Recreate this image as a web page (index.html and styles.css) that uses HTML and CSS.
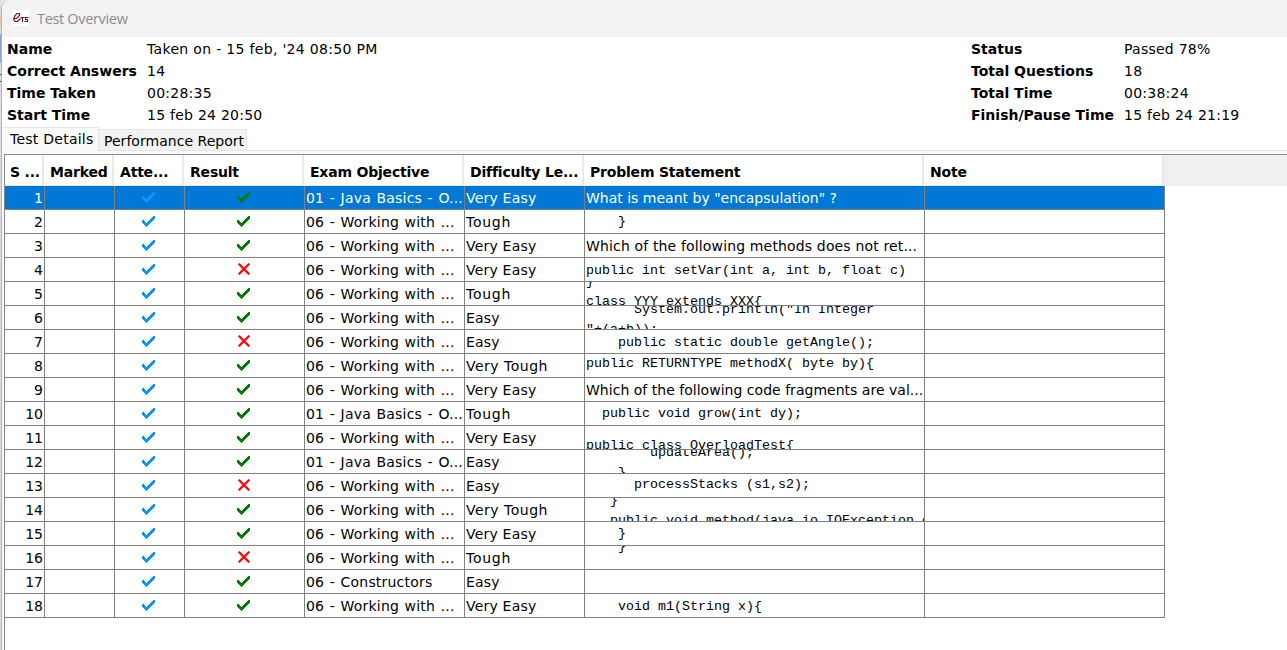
FILE: index.html
```
<!DOCTYPE html>
<html lang="en">
<head>
<meta charset="utf-8">
<title>Test Overview</title>
<link rel="stylesheet" href="styles.css">
</head>
<body>
<svg class="defs" aria-hidden="true">
  <symbol id="check" viewBox="0 0 14 13"><path d="M0 5H1L4.300 8.300 12 .5H13.300V3L5 11.500H3.800L0 7.800Z"/></symbol>
  <symbol id="cross" viewBox="0 0 12 12"><path d="M.7.7 11.300 11.300M11.300.7.7 11.300"/></symbol>
</svg>
<div class="desktop">
  <div class="behind"><i class="b1"></i><i class="b2"></i><i class="b3"></i><i class="b4"></i></div>
  <main class="window">
    <header class="titlebar">
      <svg class="logo" viewBox="0 0 16 16"><rect width="16" height="16" fill="#fff"/><path d="M0 8.500H3.500L6.500 5.500V3.500H4L2 5.500 1 8.500V10.500L2.500 11.500H4.500L7.500 8.500M7.500 7.500H11.500M9.500 7.500V12M15.500 7.500H12.500V9.500H14.500V11.500H11.500" fill="none" stroke="#701820" stroke-width="1.200"/></svg>
      <span class="title">Test Overview</span>
    </header>
    <section class="summary">
      <dl class="facts left">
        <dt>Name</dt><dd class="taken">Taken on - 15 feb, '24 08:50 PM</dd>
        <dt>Correct Answers</dt><dd>14</dd>
        <dt>Time Taken</dt><dd>00:28:35</dd>
        <dt>Start Time</dt><dd>15 feb 24 20:50</dd>
      </dl>
      <dl class="facts right">
        <dt>Status</dt><dd>Passed 78%</dd>
        <dt>Total Questions</dt><dd>18</dd>
        <dt>Total Time</dt><dd>00:38:24</dd>
        <dt>Finish/Pause Time</dt><dd>15 feb 24 21:19</dd>
      </dl>
    </section>
    <nav class="tabs"><span class="tab active">Test Details</span><span class="tab">Performance Report</span></nav>
    <section class="pane">
      <div class="row head"><span>S ...</span><span>Marked</span><span>Atte...</span><span>Result</span><span>Exam Objective</span><span>Difficulty Le...</span><span>Problem Statement</span><span>Note</span></div>
      <div class="row selected"><b>1</b><i></i><i><svg class="tick"><use href="#check"/></svg></i><i><svg class="tick ok"><use href="#check"/></svg></i><span class="obj">01 - Java Basics - O...</span><span>Very Easy</span><span class="q1">What is meant by "encapsulation" ?</span><i></i></div>
      <div class="row"><b>2</b><i></i><i><svg class="tick"><use href="#check"/></svg></i><i><svg class="tick ok"><use href="#check"/></svg></i><span class="obj">06 - Working with ...</span><span class="tough">Tough</span><pre class="d2">    }</pre><i></i></div>
      <div class="row"><b>3</b><i></i><i><svg class="tick"><use href="#check"/></svg></i><i><svg class="tick ok"><use href="#check"/></svg></i><span class="obj">06 - Working with ...</span><span>Very Easy</span><span class="q2">Which of the following methods does not ret...</span><i></i></div>
      <div class="row"><b>4</b><i></i><i><svg class="tick"><use href="#check"/></svg></i><i><svg class="fail"><use href="#cross"/></svg></i><span class="obj">06 - Working with ...</span><span>Very Easy</span><pre class="d3">public int setVar(int a, int b, float c)</pre><i></i></div>
      <div class="row"><b>5</b><i></i><i><svg class="tick"><use href="#check"/></svg></i><i><svg class="tick ok"><use href="#check"/></svg></i><span class="obj">06 - Working with ...</span><span class="tough">Tough</span><pre><code class="u10">}
class YYY extends XXX{</code></pre><i></i></div>
      <div class="row"><b>6</b><i></i><i><svg class="tick"><use href="#check"/></svg></i><i><svg class="tick ok"><use href="#check"/></svg></i><span class="obj">06 - Working with ...</span><span>Easy</span><pre><code class="u6">      System.out.println("In Integer
"+(a+b));</code></pre><i></i></div>
      <div class="row"><b>7</b><i></i><i><svg class="tick"><use href="#check"/></svg></i><i><svg class="fail"><use href="#cross"/></svg></i><span class="obj">06 - Working with ...</span><span>Easy</span><pre class="d3">    public static double getAngle();</pre><i></i></div>
      <div class="row"><b>8</b><i></i><i><svg class="tick"><use href="#check"/></svg></i><i><svg class="tick ok"><use href="#check"/></svg></i><span class="obj">06 - Working with ...</span><span class="vt">Very Tough</span><pre>public RETURNTYPE methodX( byte by){</pre><i></i></div>
      <div class="row"><b>9</b><i></i><i><svg class="tick"><use href="#check"/></svg></i><i><svg class="tick ok"><use href="#check"/></svg></i><span class="obj">06 - Working with ...</span><span>Very Easy</span><span class="q3">Which of the following code fragments are val...</span><i></i></div>
      <div class="row"><b>10</b><i></i><i><svg class="tick"><use href="#check"/></svg></i><i><svg class="tick ok"><use href="#check"/></svg></i><span class="obj">01 - Java Basics - O...</span><span class="tough">Tough</span><pre class="d2">  public void grow(int dy);</pre><i></i></div>
      <div class="row"><b>11</b><i></i><i><svg class="tick"><use href="#check"/></svg></i><i><svg class="tick ok"><use href="#check"/></svg></i><span class="obj">06 - Working with ...</span><span>Very Easy</span><pre class="d10">public class OverloadTest{</pre><i></i></div>
      <div class="row"><b>12</b><i></i><i><svg class="tick"><use href="#check"/></svg></i><i><svg class="tick ok"><use href="#check"/></svg></i><span class="obj">01 - Java Basics - O...</span><span>Easy</span><pre><code class="u7">        updateArea();
    }</code></pre><i></i></div>
      <div class="row"><b>13</b><i></i><i><svg class="tick"><use href="#check"/></svg></i><i><svg class="fail"><use href="#cross"/></svg></i><span class="obj">06 - Working with ...</span><span>Easy</span><pre class="d1">      processStacks (s1,s2);</pre><i></i></div>
      <div class="row"><b>14</b><i></i><i><svg class="tick"><use href="#check"/></svg></i><i><svg class="tick ok"><use href="#check"/></svg></i><span class="obj">06 - Working with ...</span><span class="vt">Very Tough</span><pre><code class="u8">   }
   public void method(java.io.IOException e</code></pre><i></i></div>
      <div class="row"><b>15</b><i></i><i><svg class="tick"><use href="#check"/></svg></i><i><svg class="tick ok"><use href="#check"/></svg></i><span class="obj">06 - Working with ...</span><span>Very Easy</span><pre class="d2">    }</pre><i></i></div>
      <div class="row"><b>16</b><i></i><i><svg class="tick"><use href="#check"/></svg></i><i><svg class="fail"><use href="#cross"/></svg></i><span class="obj">06 - Working with ...</span><span class="tough">Tough</span><pre><code class="u9">    }</code></pre><i></i></div>
      <div class="row"><b>17</b><i></i><i><svg class="tick"><use href="#check"/></svg></i><i><svg class="tick ok"><use href="#check"/></svg></i><span class="obj">06 - Constructors</span><span>Easy</span><i></i><i></i></div>
      <div class="row"><b>18</b><i></i><i><svg class="tick"><use href="#check"/></svg></i><i><svg class="tick ok"><use href="#check"/></svg></i><span class="obj">06 - Working with ...</span><span>Very Easy</span><pre class="d3">    void m1(String x){</pre><i></i></div>
    </section>
  </main>
</div>
</body>
</html>
```
FILE: styles.css
```
* { box-sizing: border-box; }
body { margin: 0; font: 14px/22px "DejaVu Sans", Verdana, sans-serif; color: #000; background: #e9e9e9; overflow: hidden; }
.defs { display: none; }
.desktop { display: flex; height: 650px; }
.behind { width: 1px; flex: none; background: #ddd; display: flex; flex-direction: column; }
.b1 { height: 11px; margin-top: 15px; background: #d8cbb0; }
.b2 { height: 29px; margin-top: 8px; background: #8aa5ce; }
.b3 { height: 1px; margin-top: 11px; background: #333; }
.b4 { height: 1px; margin-top: 6px; background: #333; }
.window { flex: 1; min-width: 0; display: flex; flex-direction: column; background: #fff; border-left: 1px solid #b5b5b5; border-top-left-radius: 9px; overflow: hidden; }
.titlebar { height: 37px; flex: none; display: flex; align-items: center; background: #f3f3f3; padding-left: 11px; }
.logo { width: 16px; height: 16px; margin-top: -1px; }
.title { font: 14.500px/20px "Open Sans", "Noto Sans", sans-serif; color: #8c8c8c; margin-left: 8px; letter-spacing: -.33px; }
.summary { display: flex; height: 90px; flex: none; padding: 1px 0 0 5px; }
.facts { display: grid; grid-auto-rows: 22px; margin: 0; white-space: nowrap; }
.left { grid-template-columns: 140px 1fr; width: 964px; }
.right { grid-template-columns: 153px 1fr; }
dt, .head { font-weight: bold; letter-spacing: 0; }
dd { margin: 0; letter-spacing: .25px; }
.taken { letter-spacing: .32px; }
.tabs { display: flex; align-items: flex-start; height: 24px; flex: none; border-bottom: 1px solid #e3e3e3; }
.tab { height: 22px; margin-top: 2px; padding-left: 5px; width: 148px; border: 1px solid #e5e5e5; border-left: 0; background: #f2f2f2; line-height: 22px; white-space: nowrap; letter-spacing: .03px; }
.tab.active { width: 97px; height: 24px; margin-top: 0; padding-left: 8px; background: #fafafa; border-bottom: 0; letter-spacing: .25px; }
.pane { flex: 1; margin: 3px 0 0 2px; border: solid #828790; border-width: 1px 0 0 1px; box-shadow: 0 0 0 3px #f9f9f9; background: #fff; }
.row { display: grid; grid-template-columns: 40px 70px 70px 120px 160px 120px 340px 240px; height: 24px; width: 1160px; letter-spacing: .2px; }
.row > * { border: solid #808080; border-width: 0 1px 1px 0; overflow: hidden; white-space: nowrap; height: 24px; line-height: 24px; padding: 0 0 0 1px; }
.row > b { font-weight: normal; text-align: right; padding-right: 1px; letter-spacing: 0; }
.row > i { display: flex; align-items: center; justify-content: center; }
.row > .obj { word-spacing: .9px; }
.row > .vt { letter-spacing: .5px; }
.row > .tough { letter-spacing: .75px; }
.row > .q1 { letter-spacing: 0; }
.row > .q2 { letter-spacing: .15px; }
.row > .q3 { letter-spacing: .02px; }
.row > pre { margin: 0; white-space: pre; font: 13.333px/19px "Liberation Mono", "Courier New", monospace; letter-spacing: 0; }
pre code { display: block; font: inherit; line-height: 20px; }
.row.head { height: 31px; width: auto; background: linear-gradient(90deg, transparent 1159px, #f0f0f0 1159px); letter-spacing: -.2px; }
.row.head > * { height: 31px; line-height: 34px; border-color: #e9e9e9; border-right-width: 2px; padding-left: 6px; margin: 0 1px 0 -1px; }
.row.head > :first-child { margin-left: 0; padding-left: 5px; }
.selected { background: #0078d7; color: #fff; }
.tick { width: 14px; height: 13px; margin: -1px 3px 0 0; fill: #0a95ff; shape-rendering: crispEdges; }
.tick.ok { fill: #087a08; }
.fail { width: 12px; height: 12px; margin: -2px 3px 0 0; fill: none; stroke: #f00; stroke-width: 2.200; }
.row > .d1 { padding-top: 1px; }
.row > .d2 { padding-top: 2px; }
.row > .d3 { padding-top: 3px; }
.row > .d10 { padding-top: 10px; }
.u6 { margin-top: -6px; }
.u7 { margin-top: -7px; }
.u8 { margin-top: -7px; }
.u9 { margin-top: -9px; }
.u10 { margin-top: -10px; }
```
